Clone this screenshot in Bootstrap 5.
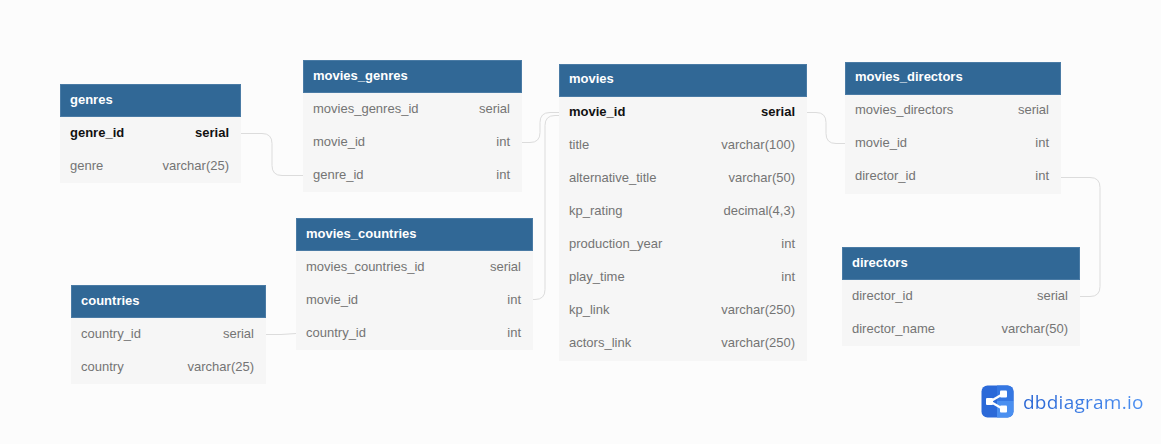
<!DOCTYPE html>
<html lang="en">
<head>
<meta charset="utf-8">
<title>dbdiagram</title>
<link href="https://cdn.jsdelivr.net/npm/bootstrap@5.3.0/dist/css/bootstrap.min.css" rel="stylesheet">
<style>
html,body{margin:0;height:100%;background:#fcfcfc;overflow:hidden}
.canvas-area{position:relative;width:1161px;height:444px;font-family:"Liberation Sans",Arial,sans-serif;font-size:13px}
.wires{position:absolute;left:0;top:0}
.wires path{fill:none;stroke:#dcdcdc;stroke-width:1}
.db-table{position:absolute;background:#f6f6f6}
.db-head{height:33px;background:#316896;color:#fff;font-weight:700;padding:0 10px 2px;box-shadow:inset 0 0 0 1px #4a7ba5}
.db-row{height:33px;padding:0 12px 2px 10px;color:#747474}
.db-row.pk{color:#111;font-weight:700}
.text-lift .db-head,.text-lift .db-row{padding-bottom:4px}
.brand-mark{position:absolute;left:981px;top:385px;width:33px;height:33px}
.brand-name{position:absolute;left:1023px;top:388px;font-family:"Open Sans",sans-serif;font-size:19px;line-height:28px;letter-spacing:.25px;background:linear-gradient(90deg,#2a66d4,#4b90f2);-webkit-background-clip:text;background-clip:text;color:transparent}
</style>
</head>
<body>
<div class="canvas-area">

<div class="db-table" style="left:60px;top:84px;width:181px">
  <div class="db-head d-flex align-items-center">genres</div>
  <div class="db-row pk d-flex align-items-center justify-content-between"><span>genre_id</span><span>serial</span></div>
  <div class="db-row d-flex align-items-center justify-content-between"><span>genre</span><span>varchar(25)</span></div>
</div>

<div class="db-table" style="left:303px;top:60px;width:219px">
  <div class="db-head d-flex align-items-center">movies_genres</div>
  <div class="db-row d-flex align-items-center justify-content-between"><span>movies_genres_id</span><span>serial</span></div>
  <div class="db-row d-flex align-items-center justify-content-between"><span>movie_id</span><span>int</span></div>
  <div class="db-row d-flex align-items-center justify-content-between"><span>genre_id</span><span>int</span></div>
</div>

<div class="db-table text-lift" style="left:559px;top:64px;width:248px">
  <div class="db-head d-flex align-items-center">movies</div>
  <div class="db-row pk d-flex align-items-center justify-content-between"><span>movie_id</span><span>serial</span></div>
  <div class="db-row d-flex align-items-center justify-content-between"><span>title</span><span>varchar(100)</span></div>
  <div class="db-row d-flex align-items-center justify-content-between"><span>alternative_title</span><span>varchar(50)</span></div>
  <div class="db-row d-flex align-items-center justify-content-between"><span>kp_rating</span><span>decimal(4,3)</span></div>
  <div class="db-row d-flex align-items-center justify-content-between"><span>production_year</span><span>int</span></div>
  <div class="db-row d-flex align-items-center justify-content-between"><span>play_time</span><span>int</span></div>
  <div class="db-row d-flex align-items-center justify-content-between"><span>kp_link</span><span>varchar(250)</span></div>
  <div class="db-row d-flex align-items-center justify-content-between"><span>actors_link</span><span>varchar(250)</span></div>
</div>

<div class="db-table text-lift" style="left:845px;top:62px;width:216px">
  <div class="db-head d-flex align-items-center">movies_directors</div>
  <div class="db-row d-flex align-items-center justify-content-between"><span>movies_directors</span><span>serial</span></div>
  <div class="db-row d-flex align-items-center justify-content-between"><span>movie_id</span><span>int</span></div>
  <div class="db-row d-flex align-items-center justify-content-between"><span>director_id</span><span>int</span></div>
</div>

<div class="db-table" style="left:296px;top:218px;width:237px">
  <div class="db-head d-flex align-items-center">movies_countries</div>
  <div class="db-row d-flex align-items-center justify-content-between"><span>movies_countries_id</span><span>serial</span></div>
  <div class="db-row d-flex align-items-center justify-content-between"><span>movie_id</span><span>int</span></div>
  <div class="db-row d-flex align-items-center justify-content-between"><span>country_id</span><span>int</span></div>
</div>

<div class="db-table" style="left:71px;top:285px;width:195px">
  <div class="db-head d-flex align-items-center">countries</div>
  <div class="db-row d-flex align-items-center justify-content-between"><span>country_id</span><span>serial</span></div>
  <div class="db-row d-flex align-items-center justify-content-between"><span>country</span><span>varchar(25)</span></div>
</div>

<div class="db-table" style="left:842px;top:247px;width:238px">
  <div class="db-head d-flex align-items-center">directors</div>
  <div class="db-row d-flex align-items-center justify-content-between"><span>director_id</span><span>serial</span></div>
  <div class="db-row d-flex align-items-center justify-content-between"><span>director_name</span><span>varchar(50)</span></div>
</div>

<svg class="wires" width="1161" height="444" viewBox="0 0 1161 444">
  <path d="M241 133.500H262Q272 133.500 272 143.500V165.500Q272 175.500 282 175.500H303"/>
  <path d="M522 142.500H530Q540 142.500 540 132.500V122.500Q540 112.500 550 112.500H559"/>
  <path d="M533 299.500H535Q545 299.500 545 289.500V125.500Q545 115.500 555 115.500H559"/>
  <path d="M807 112.500H816Q826 112.500 826 122.500V133.500Q826 143.500 836 143.500H845"/>
  <path d="M1061 177.500H1090Q1100 177.500 1100 187.500V286.500Q1100 296.500 1090 296.500H1080"/>
  <path d="M266 334.500H281L296 333.500"/>
</svg>

<svg class="brand-mark" viewBox="0 0 33 33">
  <defs><clipPath id="tile"><rect x="0.500" y="0.500" width="32" height="32" rx="6"/></clipPath></defs>
  <g clip-path="url(#tile)">
    <rect width="33" height="33" fill="#2b69d8"/>
    <rect x="16" width="17" height="16" fill="#3577e2"/>
    <rect x="16" y="16" width="17" height="17" fill="#4a8ff0"/>
  </g>
  <path d="M9 16.500 22 9M9 16.500 22 24" stroke="#fff" stroke-width="2.400" fill="none"/>
  <rect x="5" y="13" width="7" height="7" rx="1" fill="#fff"/>
  <rect x="19" y="5.500" width="7" height="7" rx="1" fill="#fff"/>
  <rect x="19" y="20.500" width="7" height="7" rx="1" fill="#fff"/>
</svg>
<div class="brand-name">dbdiagram.io</div>

</div>
<script src="https://cdn.jsdelivr.net/npm/bootstrap@5.3.0/dist/js/bootstrap.bundle.min.js"></script>
</body>
</html>
